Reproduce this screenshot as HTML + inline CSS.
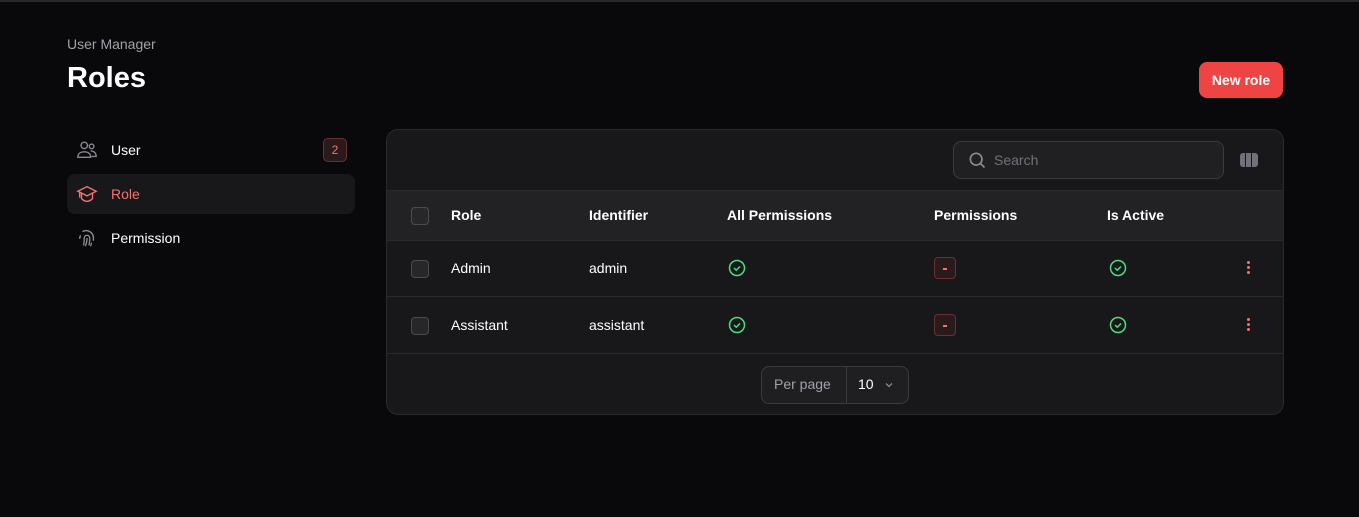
<!DOCTYPE html><html><head><style>
body{margin:0;background:#09090b;font-family:"Liberation Sans",sans-serif;width:1359px;height:517px;overflow:hidden;position:relative;color:#fff}
.a{position:absolute}
.top{left:0;top:0;width:1359px;height:2px;background:#27272a}
.t{font-size:14px}
.card{left:386px;top:129px;width:896px;height:284px;background:#18181b;border:1px solid #2a2a2e;border-radius:12px;overflow:hidden}
.cb{position:absolute;width:16px;height:16px;border:1px solid #4a4a50;background:#27272a;border-radius:4px}
.ch{position:absolute;width:18px;height:18px}
.minus{position:absolute;width:22px;height:22px;border:1px solid #6b3030;background:#2a1a1b;border-radius:4px;box-sizing:border-box}
.minus:after{content:"";position:absolute;left:8px;top:10px;width:4px;height:1.5px;background:#f87171}
.dots{position:absolute;width:3px}
.dots i{display:block;width:3px;height:3px;border-radius:50%;background:#f87171;margin-bottom:2px}
</style></head><body>
<div class="a top"></div>
<div class="a" style="left:67px;top:36px;font-size:14px;color:#a1a1aa">User Manager</div>
<div class="a" style="left:67px;top:62px;font-size:29px;font-weight:bold">Roles</div>
<div class="a" style="left:1199px;top:62px;width:84px;height:36px;background:#ef4444;border-radius:8px;font-size:14px;font-weight:bold;text-align:center;line-height:36px">New role</div>

<svg class="a" style="left:76px;top:139px" width="22" height="22" viewBox="0 0 24 24" fill="none" stroke="#8a8a90" stroke-width="1.5"><circle cx="9" cy="7" r="3.5"/><circle cx="17" cy="8" r="2.5"/><path d="M2 20c0-4 3-6 7-6s7 2 7 6zM16 13c3 0 6 2 6 6h-5"/></svg>
<div class="a t" style="left:111px;top:142px">User</div>
<div class="a" style="left:323px;top:138px;width:22px;height:22px;border:1px solid #6b3030;background:#2a1a1b;border-radius:5px;color:#f87171;font-size:12px;text-align:center;line-height:22px">2</div>
<div class="a" style="left:67px;top:174px;width:288px;height:40px;background:#18181b;border-radius:8px"></div>
<svg class="a" style="left:76px;top:183px" width="22" height="22" viewBox="0 0 24 24" fill="none" stroke="#f87171" stroke-width="1.5"><path d="M2 9l10-5 10 5-10 5z"/><path d="M6 11v6c2 2 4 3 6 3s4-1 6-3v-6"/><path d="M4 10v6"/></svg>
<div class="a t" style="left:111px;top:186px;color:#f87171">Role</div>
<svg class="a" style="left:76px;top:227px" width="22" height="22" viewBox="0 0 24 24" fill="none" stroke="#8a8a90" stroke-width="1.5"><path d="M7 5a8 8 0 0 1 12 7v3M5 9a8 8 0 0 0-1 4M8 20c1-2 1-5 1-8a3 3 0 0 1 6 0c0 3 0 5-1 8M12 12c0 4-1 7-2 9M17 17c0 1-1 3-1 4"/></svg>
<div class="a t" style="left:111px;top:230px">Permission</div>

<div class="a card">
 <div class="a" style="left:566px;top:11px;width:269px;height:36px;border:1px solid #3a3a40;border-radius:8px;background:#202023"></div>
 <svg class="a" style="left:580px;top:20px" width="20" height="20" viewBox="0 0 24 24" fill="none" stroke="#8a8a90" stroke-width="2"><circle cx="11" cy="11" r="7"/><path d="M16 16l5 5"/></svg>
 <div class="a t" style="left:607px;top:22px;color:#71717a">Search</div>
 <div class="a" style="left:853px;top:23px;width:18px;height:14px;background:#71717a;border-radius:3px"></div>
 <div class="a" style="left:858px;top:23px;width:1px;height:14px;background:#18181b"></div>
 <div class="a" style="left:864px;top:23px;width:1px;height:14px;background:#18181b"></div>
 <div class="a" style="left:0;top:60px;width:896px;height:49px;background:#222225;border-top:1px solid #2a2a2e;border-bottom:1px solid #2a2a2e"></div>
 <div class="cb" style="left:24px;top:77px"></div>
 <div class="a t" style="left:64px;top:77px;font-weight:bold">Role</div>
 <div class="a t" style="left:202px;top:77px;font-weight:bold">Identifier</div>
 <div class="a t" style="left:340px;top:77px;font-weight:bold">All Permissions</div>
 <div class="a t" style="left:547px;top:77px;font-weight:bold">Permissions</div>
 <div class="a t" style="left:720px;top:77px;font-weight:bold">Is Active</div>
 <div class="a" style="left:0;top:166px;width:896px;height:1px;background:#2a2a2e"></div>
 <div class="a" style="left:0;top:223px;width:896px;height:1px;background:#2a2a2e"></div>
 <!-- row1 -->
 <div class="cb" style="left:24px;top:130px"></div>
 <div class="a t" style="left:64px;top:130px">Admin</div>
 <div class="a t" style="left:202px;top:130px">admin</div>
 <svg class="ch" style="left:341px;top:129px" viewBox="0 0 24 24" fill="none" stroke="#4ade80" stroke-width="2"><circle cx="12" cy="12" r="10"/><path d="M8 12l3 3 5-5"/></svg>
 <div class="minus" style="left:547px;top:127px"></div>
 <svg class="ch" style="left:722px;top:129px" viewBox="0 0 24 24" fill="none" stroke="#4ade80" stroke-width="2"><circle cx="12" cy="12" r="10"/><path d="M8 12l3 3 5-5"/></svg>
 <div class="dots" style="left:860px;top:131px"><i></i><i></i><i></i></div>
 <!-- row2 -->
 <div class="cb" style="left:24px;top:187px"></div>
 <div class="a t" style="left:64px;top:187px">Assistant</div>
 <div class="a t" style="left:202px;top:187px">assistant</div>
 <svg class="ch" style="left:341px;top:186px" viewBox="0 0 24 24" fill="none" stroke="#4ade80" stroke-width="2"><circle cx="12" cy="12" r="10"/><path d="M8 12l3 3 5-5"/></svg>
 <div class="minus" style="left:547px;top:184px"></div>
 <svg class="ch" style="left:722px;top:186px" viewBox="0 0 24 24" fill="none" stroke="#4ade80" stroke-width="2"><circle cx="12" cy="12" r="10"/><path d="M8 12l3 3 5-5"/></svg>
 <div class="dots" style="left:860px;top:188px"><i></i><i></i><i></i></div>
 <!-- footer -->
 <div class="a" style="left:374px;top:236px;width:146px;height:36px;border:1px solid #3a3a40;border-radius:8px;background:#1f1f22"></div>
 <div class="a" style="left:459px;top:237px;width:1px;height:36px;background:#3a3a40"></div>
 <div class="a t" style="left:387px;top:246px;color:#a1a1aa">Per page</div>
 <div class="a t" style="left:471px;top:246px">10</div>
 <svg class="a" style="left:496px;top:249px" width="12" height="12" viewBox="0 0 24 24" fill="none" stroke="#8a8a90" stroke-width="2.5"><path d="M6 9l6 6 6-6"/></svg>
</div>
</body></html>
